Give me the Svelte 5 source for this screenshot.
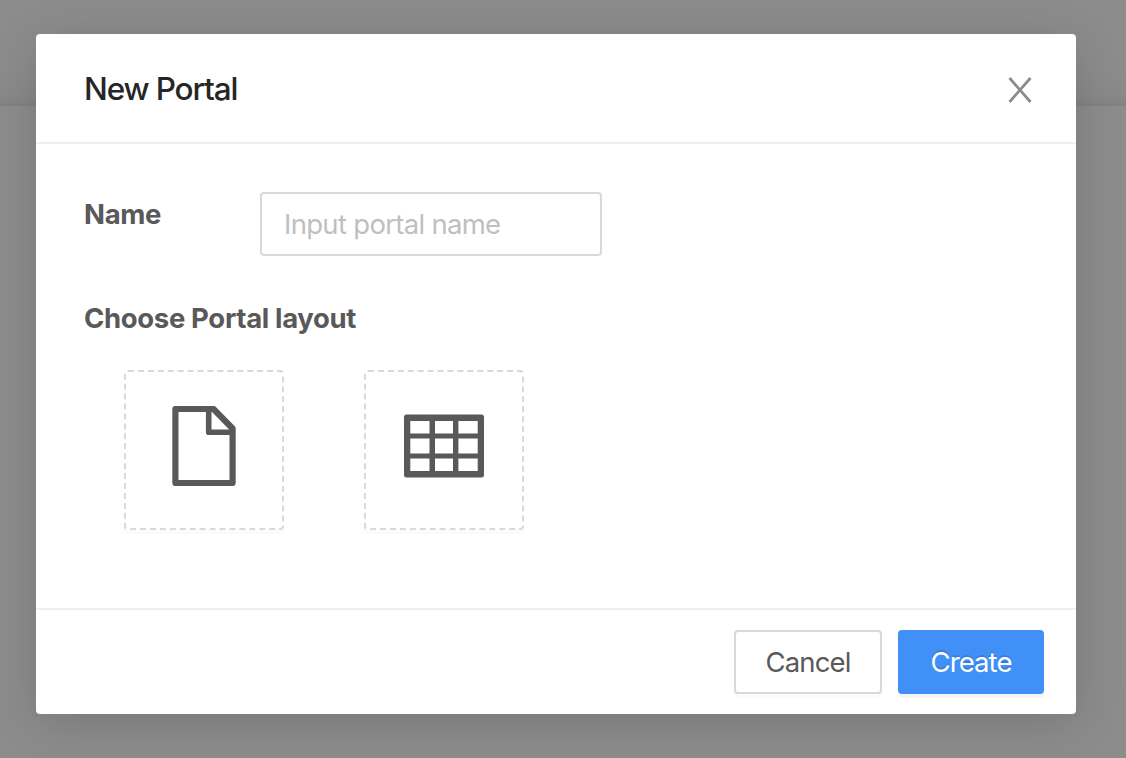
<script>
  let name = $state('');
</script>

<div class="page">
  <div class="topbar"></div>
  <div class="mask">
    <section class="modal" role="dialog" aria-label="New Portal">
      <header>
        <h1>New Portal</h1>
        <button class="close" aria-label="Close">
          <svg width="24" height="26" viewBox="0 0 24 26"><path d="M1.5 1 22.5 25M22.5 1 1.5 25" fill="none" stroke="#8a8a8a" stroke-width="2.7" /></svg>
        </button>
      </header>
      <main>
        <div class="row">
          <label for="portal-name">Name</label>
          <input id="portal-name" bind:value={name} placeholder="Input portal name" />
        </div>
        <h2>Choose Portal layout</h2>
        <div class="layouts">
          <button class="tile" aria-label="Page">
            <svg width="64" height="80" viewBox="0 0 64 80" fill="none" stroke="#595959" stroke-linejoin="round">
              <path d="M3.4 3H41.5L60.6 22.5V77H3.4Z" stroke-width="6.2" />
              <path d="M36.7 3V26.2H60.8" stroke-width="5.6" />
            </svg>
          </button>
          <button class="tile" aria-label="Grid">
            <svg width="80" height="64" viewBox="0 0 80 64">
              <path fill="#595959" fill-rule="evenodd" d="M2.5.4H77.5Q80 .4 80 2.9V61Q80 63.5 77.5 63.5H2.5Q0 63.5 0 61V2.9Q0 .4 2.5 .4ZM6.3 7V19.4H25.5V7ZM31 7V19.4H49V7ZM54.4 7V19.4H73.7V7ZM6.3 24.4V39.6H25.5V24.4ZM31 24.4V39.6H49V24.4ZM54.4 24.4V39.6H73.7V24.4ZM6.3 44.6V57H25.5V44.6ZM31 44.6V57H49V44.6ZM54.4 44.6V57H73.7V44.6Z" />
            </svg>
          </button>
        </div>
      </main>
      <footer>
        <button class="btn cancel">Cancel</button>
        <button class="btn create">Create</button>
      </footer>
    </section>
  </div>
</div>

<style>
  :global(body) { margin: 0; }
  * { box-sizing: border-box; }
  .page {
    position: relative;
    width: 1126px;
    height: 758px;
    overflow: hidden;
    background: #8c8c8c;
    font-family: Inter, "Liberation Sans", sans-serif;
    color: #595959;
  }
  .topbar {
    height: 106px;
    background: linear-gradient(#8c8c8c 70px, #898989 96px, #828282);
  }
  .mask {
    position: absolute;
    inset: 0;
    padding: 34px 0 0 36px;
  }
  .modal {
    display: flex;
    flex-direction: column;
    width: 1040px;
    height: 680px;
    background: #fff;
    border-radius: 4px;
    box-shadow: 0 8px 48px rgba(0, 0, 0, 0.15);
  }
  header {
    display: flex;
    justify-content: space-between;
    align-items: center;
    height: 110px;
    padding: 0 44px 0 48px;
    border-bottom: 2px solid #efefef;
  }
  h1, h2 { margin: 0; }
  h1 {
    padding-top: 2px;
    font-size: 31.5px;
    font-weight: 550;
    line-height: 44px;
    letter-spacing: -1.15px;
    color: #262626;
  }
  button { font: inherit; color: inherit; }
  .close {
    display: flex;
    padding: 3px 0 0;
    border: 0;
    background: none;
  }
  main {
    flex: 1;
    padding: 48px 48px 0;
  }
  .row { display: flex; height: 64px; }
  label {
    width: 176px;
    font-size: 27.5px;
    font-weight: 700;
    line-height: 44px;
    letter-spacing: -0.3px;
  }
  input {
    width: 342px;
    height: 64px;
    padding: 0 22px;
    border: 2px solid #d9d9d9;
    border-radius: 4px;
    outline: 0;
    background: #fff;
    font: 400 27.5px Inter, sans-serif;
    letter-spacing: -0.7px;
  }
  input::placeholder { color: #bfbfbf; opacity: 1; }
  h2 {
    margin-top: 40px;
    font-size: 27.5px;
    font-weight: 700;
    line-height: 44px;
    letter-spacing: -0.34px;
  }
  .layouts {
    display: flex;
    gap: 80px;
    padding: 30px 0 0 40px;
  }
  .tile {
    display: grid;
    place-items: center;
    width: 160px;
    height: 160px;
    padding: 0 0 8px;
    border: 2px dashed #d9d9d9;
    border-radius: 4px;
    background: #fff;
    box-shadow: 0 4px 0 rgba(0, 0, 0, 0.015);
  }
  footer {
    display: flex;
    justify-content: flex-end;
    gap: 16px;
    height: 106px;
    padding: 20px 32px 0 0;
    border-top: 2px solid #efefef;
  }
  .btn {
    height: 64px;
    padding: 0;
    border: 2px solid #d9d9d9;
    border-radius: 4px;
    font-size: 27.5px;
    letter-spacing: -0.9px;
  }
  .cancel {
    width: 148px;
    background: #fff;
    box-shadow: 0 4px 0 rgba(0, 0, 0, 0.015);
  }
  .create {
    width: 146px;
    border-color: #4090f7;
    background: #4090f7;
    color: #fff;
    text-shadow: 0 -2px 0 rgba(0, 0, 0, 0.12);
    box-shadow: 0 4px 0 rgba(0, 0, 0, 0.045);
  }
</style>
